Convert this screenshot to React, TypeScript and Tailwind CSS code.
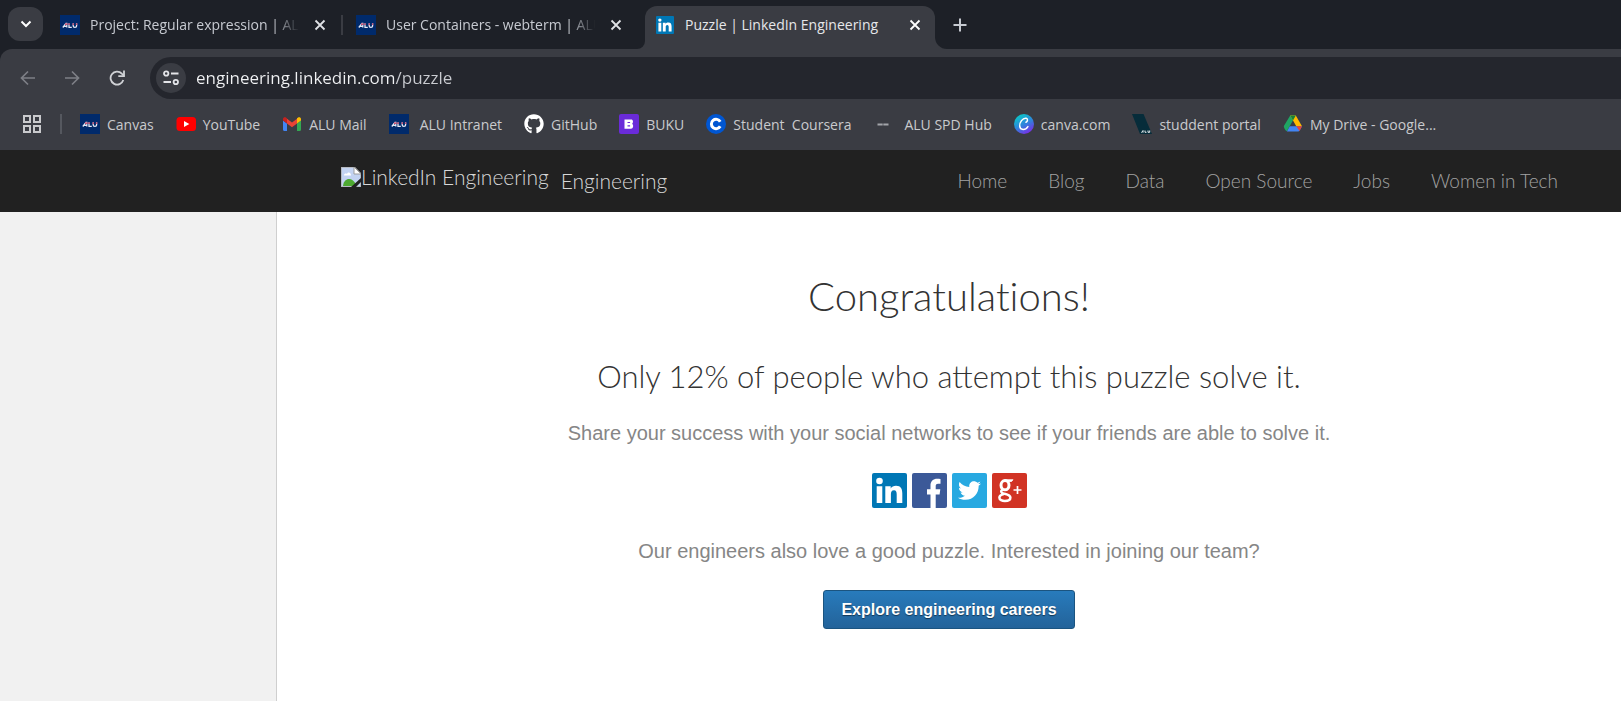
import React, { useState } from "react";
import { FaGithub, FaTwitter } from "react-icons/fa";

const uiFont = "font-['Open_Sans','Noto_Sans',sans-serif]";
const brandFont = "font-['Lato',sans-serif] font-light";

function AluIcon() {
  return (
    <svg viewBox="0 0 20 20" className="size-5 shrink-0" aria-hidden="true">
      <rect width="20" height="20" fill="#002a6b" />
      <path d="M2.800 12.500L6 8.300h.8v4.200M4.300 11.300h2.500M9 8.300v4h2.800M13.200 8.300v2.600c0 1.900 3.400 1.900 3.400 0V8.300" fill="none" stroke="#e4e8f4" strokeWidth="1.300" />
      <path d="M5 9.200h2.500M8.300 9.200h1.500M12.500 9.200h1.500M15.900 9.200h1.500" stroke="#c0264f" strokeWidth="1.300" />
    </svg>
  );
}

function LinkedInIcon({ className }: { className: string }) {
  return (
    <svg viewBox="0 0 35 35" className={className} aria-hidden="true">
      <rect width="35" height="35" rx="2" fill="#0077b5" />
      <circle cx="7.500" cy="8" r="3.300" fill="#fff" />
      <path d="M4.700 13.200h5.600V30H4.700zM13.300 13.200h5.400v2.300c1-1.700 2.900-2.700 5.300-2.700 5 0 6.300 3.200 6.300 7.800V30h-5.600v-8.500c0-2.300-.5-4.200-2.700-4.200-2.500 0-3.100 1.900-3.100 4.100V30h-5.600z" fill="#fff" />
    </svg>
  );
}

function YouTubeIcon() {
  return (
    <svg viewBox="0 0 20 20" className="size-5 shrink-0" aria-hidden="true">
      <rect x="0.500" y="3" width="19.500" height="14" rx="3.500" fill="#f00" />
      <path d="M8 7l5.300 3L8 13z" fill="#fff" />
    </svg>
  );
}

function GmailIcon() {
  return (
    <svg viewBox="0 0 20 20" className="size-5 shrink-0" aria-hidden="true">
      <path d="M1 6.500l4 3V17H2.200C1.500 17 1 16.500 1 15.800z" fill="#4285f4" />
      <path d="M15 9.500l4-3v9.300c0 .7-.5 1.200-1.200 1.200H15z" fill="#34a853" />
      <path d="M5 9.500V4.700l5 3.800 5-3.800v4.800l-5 3.800z" fill="#ea4335" />
      <path d="M1 5.200c0-2 2-2.500 3.200-1.500L5 4.300v5.200L1 6.500z" fill="#c5221f" />
      <path d="M15 4.300l.8-.6C17 2.700 19 3.200 19 5.200v1.300l-4 3z" fill="#fbbc04" />
    </svg>
  );
}

function BukuIcon() {
  return (
    <svg viewBox="0 0 20 20" className="size-5 shrink-0" aria-hidden="true">
      <rect width="20" height="20" rx="2" fill="#6a2bd9" />
      <path fillRule="evenodd" d="M5.500 5.500h6.700c1.900 0 2.400 2.800 1 4.200 1.700 1.500 1.100 5-1.200 5H5.500zM8.500 7.900v1.200h2.600V7.900zM8.500 11.200v1.200h2.600v-1.200z" fill="#fff" />
    </svg>
  );
}

function CourseraIcon() {
  return (
    <svg viewBox="0 0 20 20" className="size-5 shrink-0" aria-hidden="true">
      <circle cx="10" cy="10" r="10" fill="#0056d2" />
      <path d="M14.200 7.700A4.700 4.700 0 1 0 14.200 12.300" fill="none" stroke="#fff" strokeWidth="3" />
    </svg>
  );
}

function DashIcon() {
  return (
    <svg viewBox="0 0 20 20" className="size-5 shrink-0" aria-hidden="true">
      <path d="M4.500 10.500h5.200M10.300 10.500h5.200" stroke="#a2a4a9" strokeWidth="1.800" />
    </svg>
  );
}

function CanvaIcon() {
  return (
    <svg viewBox="0 0 20 20" className="size-5 shrink-0" aria-hidden="true">
      <defs>
        <linearGradient id="canva" x1="0.200" y1="0.100" x2="0.700" y2="1">
          <stop offset="0" stopColor="#0cc4c8" />
          <stop offset="0.500" stopColor="#2f83dc" />
          <stop offset="1" stopColor="#7d2ae8" />
        </linearGradient>
      </defs>
      <circle cx="10" cy="10" r="10" fill="url(#canva)" />
      <path d="M12 8.300c1.700-.6 2.200-3.700.2-4.100C8.800 3.600 5.200 8.500 5.700 12.200c.5 4.300 5.700 4.200 8.200.4" fill="none" stroke="#fff" strokeWidth="1.500" strokeLinecap="round" />
    </svg>
  );
}

function PortalIcon() {
  return (
    <svg viewBox="0 0 20 20" className="size-5 shrink-0" aria-hidden="true">
      <path d="M0 0h11.500L20 20H8z" fill="#062c3a" />
      <path d="M9.500 18.700l1.500-2.200v2.200M13 16.500v1.800h1.500M16 16.500v1.800h1.700v-1.800" fill="none" stroke="#e6ecef" strokeWidth="1" />
    </svg>
  );
}

function DriveIcon() {
  return (
    <svg viewBox="0 0 20 20" className="size-5 shrink-0" aria-hidden="true">
      <path d="M7.200 1.500h5.600L9.900 6.600 4 17c-.6 1-3.900-4-3-5.300z" fill="#1fa463" />
      <path d="M7.200 1.500h5.600L19 12.300h-5.700z" fill="#ffba00" />
      <path d="M3.900 17.500l2.900-5.200H19l-2.300 4.200c-.4.700-.9 1-1.700 1z" fill="#4285f4" />
      <path d="M13.300 12.300H19l-2.500 4.600z" fill="#ea4335" />
      <path d="M7.200 1.500h5.600L10 6.500z" fill="#188038" />
    </svg>
  );
}

function CloseIcon() {
  return (
    <svg viewBox="0 0 12 12" className="size-3" fill="none" stroke="currentColor" strokeWidth="1.800" aria-hidden="true">
      <path d="M1.500 1.500l9 9M10.500 1.500l-9 9" />
    </svg>
  );
}

function BrokenImageIcon() {
  return (
    <svg viewBox="0 0 20 20" className="size-5 shrink-0" aria-hidden="true">
      <path d="M0 0h13l7 7v13H0z" fill="#c3d3f2" stroke="#b3b3b3" strokeWidth="1.500" />
      <path d="M3 8.500c0-2 2-2.500 3-1.500 1-2.500 4-1.500 4 1.500z" fill="#fff" />
      <path d="M2 19c1-9 10-9 13-1v1z" fill="#4ea932" />
      <path d="M13 0v7h7z" fill="#fff" stroke="#9c9c9c" />
      <path d="M10 20L20 11v4l-5 5z" fill="#212121" />
    </svg>
  );
}

function FacebookIcon() {
  return (
    <svg viewBox="0 0 35 35" className="size-[35px]" aria-hidden="true">
      <rect width="35" height="35" rx="2" fill="#3b5998" />
      <path d="M18.500 35V21.500H15v-5.300h3.500v-3.500c0-4.700 2.700-7 6.700-7 1.500 0 2.700.1 3.300.2v4.800h-2.400c-2 0-2.400 1-2.400 2.400v3.100h4.600l-.7 5.300h-3.900V35z" fill="#fff" />
    </svg>
  );
}

function TwitterIcon() {
  return (
    <span className="flex size-[35px] items-center justify-center rounded-xs bg-[#28a9e1] text-white">
      <FaTwitter className="size-[23px]" aria-hidden="true" />
    </span>
  );
}

function GooglePlusIcon() {
  return (
    <svg viewBox="0 0 35 35" className="size-[35px]" aria-hidden="true">
      <rect width="35" height="35" rx="2" fill="#d13324" />
      <ellipse cx="13" cy="12.200" rx="4" ry="4.600" fill="none" stroke="#fff" strokeWidth="3" />
      <path d="M12.500 6.700h8.500l-1.500 1.800h-3.500" fill="#fff" stroke="#fff" strokeWidth="0.800" />
      <path d="M10.500 16.500c-2.200 1.600-1.600 3.200.8 3.900 3 .8 7.100 1.400 7.100 4.100 0 4.700-11 4.600-11 .3 0-2 1.800-3.200 4.200-3.600" fill="none" stroke="#fff" strokeWidth="2.500" />
      <path d="M21.500 17h8M25.500 13v8" stroke="#fff" strokeWidth="1.700" />
    </svg>
  );
}

interface TabProps {
  title: string;
  icon: React.ReactNode;
}

function InactiveTab({ title, icon }: TabProps) {
  return (
    <div className="flex grow items-center text-[#c7cad1]">
      {icon}
      <button type="button" className="ml-[10px] w-[218px] whitespace-nowrap text-left mask-[linear-gradient(to_right,black_84%,transparent_96%)]">
        {title}
      </button>
      <button type="button" aria-label="Close tab" className="ml-[6px] text-[#dfe1e5]">
        <CloseIcon />
      </button>
    </div>
  );
}

function TabStrip() {
  return (
    <div className="flex h-[49px] items-stretch bg-[#1d2027] text-[14px]">
      <button type="button" aria-label="Search tabs" className="ml-2 mt-[7px] flex h-[34px] w-[35px] items-center justify-center rounded-xl bg-[#3a3c43] text-white">
        <svg viewBox="0 0 12 8" className="h-2 w-3" fill="none" stroke="currentColor" strokeWidth="2" aria-hidden="true">
          <path d="M1.500 1.500L6 6l4.500-4.500" />
        </svg>
      </button>
      <div className="ml-[17px] flex w-[577px] items-center">
        <InactiveTab title="Project: Regular expression | ALU" icon={<AluIcon />} />
        <span className="mr-[13px] h-5 w-[2px] bg-[#3a3c43]" />
        <InactiveTab title="User Containers - webterm | ALU" icon={<AluIcon />} />
      </div>
      <div className="w-[8px] self-end bg-[#3a3c43]">
        <div className="h-4 rounded-br-xl bg-[#1d2027]" />
      </div>
      <div className="mt-[6px] flex w-[290px] items-center rounded-t-xl bg-[#3a3c43] pb-[6px] pl-[11px] text-[#e6e7ea]">
        <LinkedInIcon className="size-[18px] shrink-0" />
        <button type="button" className="ml-[11px] grow whitespace-nowrap text-left">Puzzle | LinkedIn Engineering</button>
        <button type="button" aria-label="Close tab" className="mr-[14px] text-white">
          <CloseIcon />
        </button>
      </div>
      <div className="w-4 self-end bg-[#3a3c43]">
        <div className="h-4 rounded-bl-xl bg-[#1d2027]" />
      </div>
      <button type="button" aria-label="New tab" className="ml-[2px] text-[#c7cad1]">
        <svg viewBox="0 0 14 14" className="size-[14px]" stroke="currentColor" strokeWidth="2" aria-hidden="true">
          <path d="M7 0.500v13M0.500 7h13" />
        </svg>
      </button>
    </div>
  );
}

function Toolbar() {
  const [url, setUrl] = useState("engineering.linkedin.com/puzzle");
  return (
    <div className="bg-[#1d2027]">
      <div className="flex h-[50px] items-end rounded-tl-xl bg-[#3a3c43]">
        <div className="flex h-[42px] w-[150px] items-center pl-5 text-[#7d7f86]">
          <button type="button" aria-label="Back">
            <svg viewBox="0 0 16 16" className="size-4" fill="none" stroke="currentColor" strokeWidth="1.700" aria-hidden="true">
              <path d="M15 8H2M8 1.500L1.500 8 8 14.500" />
            </svg>
          </button>
          <button type="button" aria-label="Forward" className="ml-7">
            <svg viewBox="0 0 16 16" className="size-4" fill="none" stroke="currentColor" strokeWidth="1.700" aria-hidden="true">
              <path d="M1 8h13M8 1.500L14.500 8 8 14.500" />
            </svg>
          </button>
          <button type="button" aria-label="Reload" className="ml-[29px] text-[#d0d2d6]">
            <svg viewBox="0 0 16 16" className="size-4" fill="none" stroke="currentColor" strokeWidth="1.800" aria-hidden="true">
              <path d="M14.300 10A6.500 6.500 0 1 1 12.800 3.600L15 5.800" />
              <path d="M15 0.500v5.700H9.300" />
            </svg>
          </button>
        </div>
        <div className="flex h-[42px] grow items-center rounded-l-full bg-[#24262d] pl-[6px]">
          <button type="button" aria-label="Site information" className="flex size-[30px] items-center justify-center rounded-full bg-[#3a3c43] text-[#e3e4e8]">
            <svg viewBox="0 0 16 16" className="size-4" fill="none" stroke="currentColor" strokeWidth="1.800" aria-hidden="true">
              <circle cx="3.200" cy="3.500" r="2.200" />
              <path d="M8 3.500h7.500M0.500 12h7.500" />
              <circle cx="12.800" cy="12" r="2.200" />
            </svg>
          </button>
          <input
            aria-label="Address"
            value={url}
            onChange={(e) => setUrl(e.target.value)}
            className="ml-[10px] grow bg-[linear-gradient(to_right,#f1f2f4_198px,#c9cbd0_198px)] bg-clip-text text-[17px] text-transparent caret-white outline-none"
          />
        </div>
      </div>
    </div>
  );
}

const bookmarks: { label: string; icon: React.ReactNode; wide?: boolean }[] = [
  { label: "Canvas", icon: <AluIcon /> },
  { label: "YouTube", icon: <YouTubeIcon /> },
  { label: "ALU Mail", icon: <GmailIcon /> },
  { label: "ALU Intranet", icon: <AluIcon />, wide: true },
  { label: "GitHub", icon: <FaGithub className="size-5 shrink-0 text-white" aria-hidden="true" /> },
  { label: "BUKU", icon: <BukuIcon /> },
  { label: "Student  Coursera", icon: <CourseraIcon /> },
  { label: "ALU SPD Hub", icon: <DashIcon />, wide: true },
  { label: "canva.com", icon: <CanvaIcon /> },
  { label: "studdent portal", icon: <PortalIcon /> },
  { label: "My Drive - Google...", icon: <DriveIcon /> },
];

function BookmarkBar() {
  return (
    <div className="flex h-[51px] items-center bg-[#3a3c43] pb-px pl-[23px] text-[14px] text-[#c9cacd]">
      <button type="button" aria-label="Apps">
        <svg viewBox="0 0 18 18" className="size-[18px]" fill="none" stroke="currentColor" strokeWidth="2" aria-hidden="true">
          <path d="M1 1h6v6H1zM11 1h6v6h-6zM1 11h6v6H1zM11 11h6v6h-6z" />
        </svg>
      </button>
      <span className="ml-[19px] h-5 w-[2px] bg-[#55585f]" />
      <nav aria-label="Bookmarks" className="ml-[18px] flex gap-[22px]">
        {bookmarks.map((b) => (
          <a key={b.label} href="#" className={`flex items-center whitespace-pre ${b.wide ? "gap-[11px]" : "gap-[7px]"}`}>
            {b.icon}
            {b.label}
          </a>
        ))}
      </nav>
    </div>
  );
}

const links = ["Home", "Blog", "Data", "Open Source", "Jobs", "Women in Tech"];

function SiteHeader() {
  return (
    <header className={`flex h-[62px] items-center justify-between bg-[#212121] pl-[341px] pr-[63px] ${brandFont}`}>
      <a href="#" className="flex items-center text-[21px] leading-5 text-[#d8d8d8]">
        <span className="flex items-center pb-[8px]">
          <BrokenImageIcon />
          LinkedIn Engineering
        </span>
        <span className="ml-3">Engineering</span>
      </a>
      <nav aria-label="Site" className="flex gap-[41px] text-[19px] text-[#a3a3a3]">
        {links.map((l) => (
          <a key={l} href="#">{l}</a>
        ))}
      </nav>
    </header>
  );
}

const shares = [
  { name: "LinkedIn", icon: <LinkedInIcon className="size-[35px]" /> },
  { name: "Facebook", icon: <FacebookIcon /> },
  { name: "Twitter", icon: <TwitterIcon /> },
  { name: "Google Plus", icon: <GooglePlusIcon /> },
];

export default function App() {
  return (
    <div className={`flex min-h-screen flex-col bg-white ${uiFont}`}>
      <TabStrip />
      <Toolbar />
      <BookmarkBar />
      <SiteHeader />
      <div className="flex grow">
        <aside className="w-[277px] shrink-0 border-r border-[#cfcfcf] bg-[#f1f1f1]" />
        <main className="flex grow flex-col items-center pt-[60px] font-['Liberation_Sans',Arial,sans-serif] text-[20px] text-[#868686]">
          <h1 className={`text-[40px] leading-[48px] text-[#333] [font-variant-ligatures:none] ${brandFont}`}>Congratulations!</h1>
          <h2 className={`mt-9 text-[31px] leading-[40px] text-[#333] ${brandFont}`}>
            Only 12% of people who attempt this puzzle solve it.
          </h2>
          <p className="mt-[22px] leading-[30px]">
            Share your success with your social networks to see if your friends are able to solve it.
          </p>
          <div className="mt-[25px] flex gap-[5px]">
            {shares.map((s) => (
              <a key={s.name} href="#" aria-label={`Share on ${s.name}`}>{s.icon}</a>
            ))}
          </div>
          <p className="mt-[28px] leading-[30px]">
            Our engineers also love a good puzzle. Interested in joining our team?
          </p>
          <button
            type="button"
            className="mt-6 h-[39px] rounded-[3px] border border-[#1b5480] bg-linear-to-b from-[#287bbc] to-[#23639a] px-[17px] text-[16px] font-bold text-white text-shadow-[0_1px_1px_#00000080]"
          >
            Explore engineering careers
          </button>
        </main>
      </div>
    </div>
  );
}
